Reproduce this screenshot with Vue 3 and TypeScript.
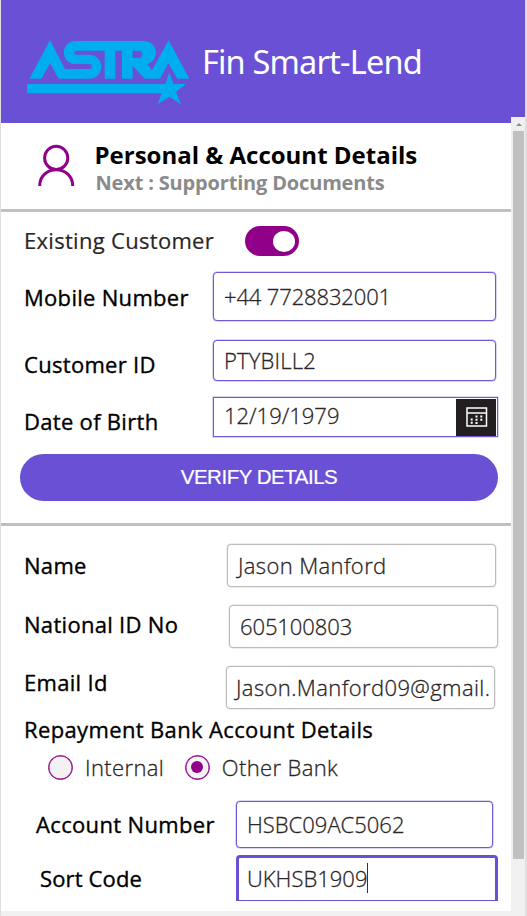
<script setup lang="ts">
import { ref } from 'vue'

interface Field {
  key: string
  label: string
  value: string
}

const identity = ref<Field[]>([
  { key: 'mobile', label: 'Mobile Number', value: '+44 7728832001' },
  { key: 'customer', label: 'Customer ID', value: 'PTYBILL2' },
  { key: 'dob', label: 'Date of Birth', value: '12/19/1979' },
])

const personal = ref<Field[]>([
  { key: 'name', label: 'Name', value: 'Jason Manford' },
  { key: 'national', label: 'National ID No', value: '605100803' },
  { key: 'email', label: 'Email Id', value: 'Jason.Manford09@gmail.' },
])

const bank = ref<Field[]>([
  { key: 'account', label: 'Account Number', value: 'HSBC09AC5062' },
  { key: 'sort', label: 'Sort Code', value: 'UKHSB1909' },
])

const existing = ref(true)
const bankType = ref('Other Bank')
const bankTypes = ['Internal', 'Other Bank']
</script>

<template>
  <div class="screen">
    <header class="top">
      <svg class="logo" viewBox="78 54 492 204" aria-label="Astra">
        <g fill="#00adee">
          <path d="M88 176L150 61L195 147H269Q276 147 276 139.500Q276 132 269 132H226A34.500 34.500 0 0 1 226 63H431A35 35 0 0 1 441 132L456 151L506 61L568 176H532L505 129L480 176H434L398 137V176H366V92H346V176H314V92H230Q223 92 223 98Q223 104 230 104H268A36 36 0 0 1 268 176H176L150 130L124 176ZM398 92V114H416Q427 114 427 103Q427 92 416 92Z" fill-rule="evenodd" />
          <path d="M81 192H496L508 157L520 192H558L528 215L543 253L508 230L473 253L485 220H81Z" />
        </g>
      </svg>
      <h1 class="brand">Fin Smart-Lend</h1>
    </header>

    <main class="content">
      <section class="step">
        <svg class="person" viewBox="0 0 38 44" fill="none" stroke="#910088" stroke-width="3">
          <circle cx="19.200" cy="13.900" r="11.600" />
          <path d="M2.700 42C2.700 32 10.200 25.800 19.200 25.800S35.700 32 35.700 42" />
        </svg>
        <div class="titles">
          <h2>Personal &amp; Account Details</h2>
          <p>Next : Supporting Documents</p>
        </div>
      </section>

      <section class="identity">
        <div class="row row-existing">
          <span class="label">Existing Customer</span>
          <button class="toggle" :class="{ on: existing }" aria-label="Existing Customer" @click="existing = !existing">
            <span class="knob"></span>
          </button>
        </div>
        <div v-for="f in identity" :key="f.key" class="row" :class="'row-' + f.key">
          <span class="label">{{ f.label }}</span>
          <div class="field">
            <span class="value">{{ f.value }}</span>
            <span v-if="f.key === 'dob'" class="calendar">
              <svg viewBox="0 0 22 20" fill="none" stroke="#fff" stroke-width="1.500">
                <rect x="1" y="1" width="19.500" height="18" />
                <path d="M1 6H20.500" />
                <path stroke-width="2" stroke-dasharray="2 1.200" d="M10.500 8.500V17M15.300 8.500V14M5.700 11.600V17" />
              </svg>
            </span>
          </div>
        </div>
        <button class="verify"><span>VERIFY DETAILS</span></button>
      </section>

      <section class="details">
        <div v-for="f in personal" :key="f.key" class="row" :class="'row-' + f.key">
          <span class="label">{{ f.label }}</span>
          <div class="field"><span class="value">{{ f.value }}</span></div>
        </div>
        <h3 class="subhead"><span>Repayment Bank Account Details</span></h3>
        <div class="radios">
          <label v-for="b in bankTypes" :key="b" class="radio" @click="bankType = b">
            <span class="dot" :class="{ checked: bankType === b }"></span>
            <span class="radio-text">{{ b }}</span>
          </label>
        </div>
        <div v-for="f in bank" :key="f.key" class="row" :class="'row-' + f.key">
          <span class="label">{{ f.label }}</span>
          <div class="field">
            <span class="value">{{ f.value }}</span>
            <span v-if="f.key === 'sort'" class="caret"></span>
          </div>
        </div>
      </section>
    </main>

    <div class="scrollbar">
      <svg class="arrow" viewBox="0 0 6 3"><path d="M0 3L3 0L6 3Z" fill="#8b8b8b" /></svg>
      <div class="thumb"></div>
    </div>
  </div>
</template>

<style>
body {
  background: #f0f0f0;
}
</style>

<style scoped>
.screen {
  position: relative;
  box-sizing: border-box;
  width: 527px;
  height: 916px;
  overflow: hidden;
  border-left: 1px solid #dedede;
  border-right: 2px solid #dedede;
  background: #f0f0f0;
  font-family: "Open Sans", "Noto Sans", sans-serif;
  color: #000;
}
h1, h2, h3, p {
  margin: 0;
}
button {
  border: 0;
  padding: 0;
}
.top {
  box-sizing: border-box;
  display: flex;
  align-items: flex-start;
  height: 123px;
  padding: 38px 0 0 25px;
  background: #6950d5;
}
.logo {
  width: 164px;
  height: 68px;
}
.brand {
  margin: 1px 0 0 12px;
  font-family: "Noto Sans", sans-serif;
  font-size: 32.500px;
  font-weight: 400;
  line-height: 46px;
  letter-spacing: -0.820px;
  white-space: nowrap;
  color: #fff;
}
.content {
  height: 788px;
  width: 510px;
  background: #fff;
}
.step {
  box-sizing: border-box;
  display: flex;
  height: 89px;
  padding: 21px 0 0 36px;
  border-bottom: 3px solid #c0c0c0;
}
.person {
  width: 38px;
  height: 44px;
}
.titles {
  margin: -4px 0 0 19.500px;
  white-space: nowrap;
}
.titles h2 {
  font-size: 24px;
  font-weight: 700;
  line-height: 30px;
}
.titles p {
  font-size: 20px;
  font-weight: 700;
  line-height: 25px;
  letter-spacing: -0.170px;
  padding-left: 1px;
  color: #8a8a8a;
}
.identity {
  box-sizing: border-box;
  height: 314px;
  padding-top: 14px;
  border-bottom: 3px solid #c0c0c0;
}
.row {
  display: flex;
  align-items: flex-start;
  padding-left: 23px;
}
.label {
  flex: none;
  font-size: 22px;
  font-weight: 500;
  line-height: 30px;
  letter-spacing: 0.300px;
  white-space: nowrap;
  -webkit-text-stroke: 0.350px currentColor;
}
.row-existing {
  height: 46px;
}
.row-existing .label {
  margin-top: -1px;
  color: #2b2526;
  -webkit-text-stroke-width: 0.200px;
}
.toggle {
  box-sizing: border-box;
  width: 54px;
  height: 30px;
  margin-left: auto;
  margin-right: 212px;
  border-radius: 15px;
  background: #999;
  display: flex;
  align-items: center;
  padding: 0 4px 0 5px;
}
.toggle.on {
  background: #910088;
  justify-content: flex-end;
}
.knob {
  width: 22px;
  height: 21px;
  border-radius: 50%;
  background: #fff;
}
.field {
  box-sizing: border-box;
  display: flex;
  align-items: center;
  margin-left: auto;
  padding-left: 10px;
  border: 1px solid #bcbcbc;
  border-radius: 4px;
  background: #fff;
  box-shadow: 0 0 0 0.500px rgba(188, 188, 188, 0.500);
  overflow: hidden;
}
.value {
  flex: none;
  margin-top: -2px;
  font-size: 22px;
  font-weight: 300;
  line-height: 30px;
  white-space: nowrap;
  color: #2b2526;
  -webkit-text-stroke: 0.300px currentColor;
}
.row-mobile .field,
.row-customer .field,
.row-dob .field,
.row-account .field {
  border: 1px solid #7157da;
  box-shadow: 0 0 0 0.500px rgba(113, 87, 218, 0.500);
}
.row-mobile {
  height: 68px;
}
.row-mobile .field {
  width: 283px;
  height: 49px;
  margin-right: 15px;
}
.row-mobile .value {
  margin-top: -1px;
  letter-spacing: -0.140px;
}
.row-mobile .label {
  padding-top: 10px;
}
.row-customer {
  height: 57px;
}
.row-customer .field {
  width: 283px;
  height: 41px;
  margin-right: 15px;
}
.row-customer .value {
  margin-top: -1px;
  letter-spacing: 0.200px;
}
.row-customer .label {
  padding-top: 9px;
}
.row-dob {
  height: 57px;
}
.row-dob .field {
  width: 285px;
  height: 40px;
  margin-right: 13px;
  border-radius: 0;
}
.row-dob .label {
  padding-top: 9px;
}
.row-dob .value {
  margin-top: -4px;
}
.calendar {
  display: flex;
  align-items: center;
  justify-content: center;
  width: 40px;
  height: 37px;
  margin-left: auto;
  margin-right: 1px;
  background: #231f20;
}
.calendar svg {
  width: 22px;
  height: 20px;
  margin-left: 2px;
}
.verify {
  display: block;
  width: 478px;
  height: 47px;
  margin-left: 19px;
  border-radius: 24px;
  background: #6950d5;
  color: #fff;
  font-family: "Liberation Sans", sans-serif;
  font-size: 20.500px;
  letter-spacing: -0.480px;
  line-height: 45px;
  padding-bottom: 2px;
  -webkit-text-stroke: 0.200px currentColor;
}
.details {
  padding-top: 18px;
}
.row-name,
.row-national {
  height: 61px;
}
.row-name .field,
.row-national .field,
.row-email .field {
  width: 269px;
  height: 43px;
  margin-right: 15px;
}
.row-name .value {
  letter-spacing: 0.370px;
}
.row-national .field {
  margin-right: 13px;
}
.row-national .value {
  letter-spacing: -0.100px;
}
.row-email .field {
  margin-right: 16px;
  padding-left: 9px;
}
.row-email .value {
  letter-spacing: 0.400px;
}
.row-name .label {
  padding-top: 6px;
}
.row-national .label {
  padding-top: 4px;
}
.row-email {
  height: 48px;
}
.row-email .label {
  padding-top: 1px;
}
.subhead {
  padding-left: 23px;
  font-size: 22px;
  font-weight: 500;
  line-height: 30px;
  letter-spacing: 0.360px;
  -webkit-text-stroke: 0.350px currentColor;
}
.radios {
  display: flex;
  height: 57px;
  align-items: flex-start;
  padding-left: 47px;
  gap: 20.500px;
}
.radio {
  display: flex;
  align-items: center;
  margin-top: 8px;
  gap: 12px;
}
.radio-text {
  font-size: 22px;
  font-weight: 300;
  line-height: 30px;
  letter-spacing: 0.380px;
  color: #2b2526;
  -webkit-text-stroke: 0.300px currentColor;
}
.dot {
  box-sizing: border-box;
  display: flex;
  width: 25px;
  height: 25px;
  border: 1px solid #910088;
  box-shadow: inset 0 0 0 0.500px #910088;
  border-radius: 50%;
  background: #f2f2f2;
}
.dot.checked::after {
  content: "";
  width: 12px;
  height: 12px;
  margin: auto;
  border-radius: 50%;
  background: #910088;
}
.row-account {
  height: 54px;
  padding-left: 35px;
}
.row-account .field {
  width: 257px;
  height: 47px;
  margin-right: 18px;
}
.row-account .value {
  margin-top: -1px;
}
.row-account .label {
  padding-top: 8px;
  letter-spacing: 0.340px;
}
.row-sort {
  padding-left: 39px;
}
.row-sort .label {
  padding-top: 8px;
  letter-spacing: 0.150px;
}
.row-sort .field {
  align-items: flex-start;
  width: 262px;
  height: 46px;
  margin-right: 13px;
  padding-top: 7px;
  padding-left: 8px;
  border: 3px solid #6950d5;
  border-bottom-width: 1px;
  border-radius: 4px 4px 0 0;
  box-shadow: none;
}
.caret {
  width: 1px;
  height: 30px;
  margin-top: -2px;
  background: #333;
}
.scrollbar {
  position: absolute;
  top: 117px;
  right: 0;
  width: 14px;
  height: 794px;
  background: #f0f0f0;
}
.arrow {
  display: block;
  width: 6px;
  height: 3px;
  margin: 6px 0 5px 5px;
}
.thumb {
  width: 11px;
  height: 728px;
  margin-left: 2px;
  background: #c0c0c0;
}
</style>
